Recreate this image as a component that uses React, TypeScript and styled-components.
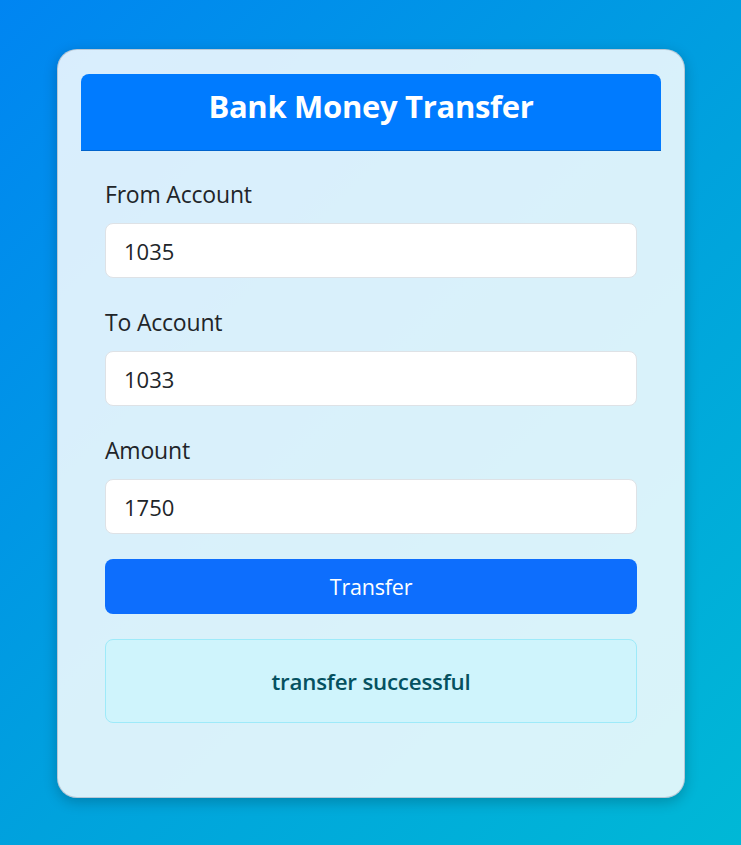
import React from "react";
import styled, { createGlobalStyle } from "styled-components";

const GlobalStyle = createGlobalStyle`
  html, body { margin: 0; padding: 0; }
  body {
    min-height: 845px;
    background: linear-gradient(135deg, #0085f2 0%, #00a2dd 55%, #00b8d6 100%);
    font-family: "Open Sans", "Noto Sans", Arial, sans-serif;
  }
  * { box-sizing: border-box; }
`;

const Page = styled.div`
  display: flex;
  justify-content: center;
  padding: 49px 0 0 1px;
`;

const Card = styled.div`
  width: 628px;
  height: 749px;
  padding: 24px 23px;
  border: 1px solid rgba(180, 195, 210, 0.9);
  border-radius: 20px;
  background: rgba(255, 255, 255, 0.85);
  box-shadow: 0 4px 14px rgba(0, 0, 0, 0.22);
`;

const Header = styled.div`
  height: 77px;
  padding-bottom: 12px;
  background: #007bff;
  border-radius: 8px 8px 0 0;
  border-bottom: 1px solid #0063cc;
  display: flex;
  align-items: center;
  justify-content: center;
`;

const Title = styled.h1`
  margin: 0;
  color: #fff;
  font-size: 31px;
  line-height: 40px;
  font-weight: 700;
  letter-spacing: -0.3px;
`;

const Form = styled.form`
  display: flex;
  flex-direction: column;
  padding: 30px 24px 0;
`;

const Field = styled.div<{ $last?: boolean }>`
  display: flex;
  flex-direction: column;
  margin-bottom: ${(p) => (p.$last ? "25px" : "31px")};
`;

const Label = styled.label`
  font-size: 23px;
  line-height: 26px;
  color: #212529;
  margin-bottom: 16px;
  letter-spacing: -0.2px;
`;

const Input = styled.input`
  height: 55px;
  padding: 0 18px;
  border: 1px solid #dee2e6;
  border-radius: 8px;
  background: #fff;
  font-family: inherit;
  font-size: 22px;
  color: #212529;
  outline: none;
`;

const Button = styled.button`
  height: 55px;
  border: none;
  border-radius: 8px;
  background: #0d6efd;
  color: #fff;
  font-family: inherit;
  font-size: 21.5px;
  letter-spacing: -0.2px;
  cursor: pointer;
`;

const Alert = styled.div`
  margin-top: 25px;
  height: 84px;
  display: flex;
  align-items: center;
  justify-content: center;
  background: #cff4fc;
  border: 1px solid #9eeaf9;
  border-radius: 8px;
  color: #055160;
  font-size: 22.3px;
  font-weight: 600;
  letter-spacing: -0.2px;
`;

export default function App() {
  return (
    <>
      <GlobalStyle />
      <Page>
        <Card>
          <Header>
            <Title>Bank Money Transfer</Title>
          </Header>
          <Form onSubmit={(e) => e.preventDefault()}>
            <Field>
              <Label>From Account</Label>
              <Input defaultValue="1035" />
            </Field>
            <Field>
              <Label>To Account</Label>
              <Input defaultValue="1033" />
            </Field>
            <Field $last>
              <Label>Amount</Label>
              <Input defaultValue="1750" />
            </Field>
            <Button type="submit">Transfer</Button>
            <Alert>transfer successful</Alert>
          </Form>
        </Card>
      </Page>
    </>
  );
}
